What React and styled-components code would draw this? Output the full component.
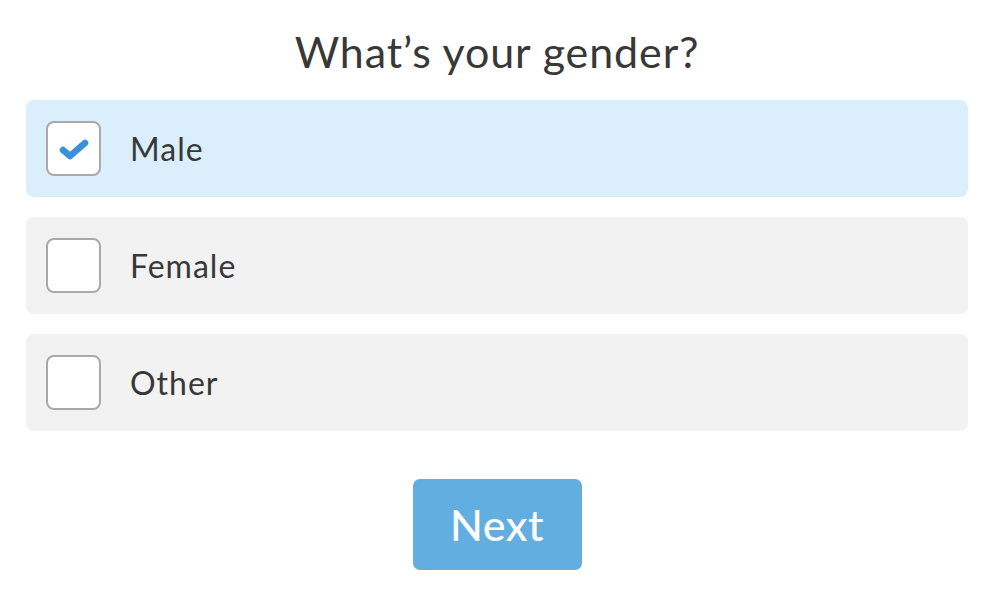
import styled, { createGlobalStyle } from "styled-components";
import { useState } from "react";

const GlobalStyle = createGlobalStyle`
  html, body {
    margin: 0;
    padding: 0;
    background: #ffffff;
  }
  body {
    font-family: "Lato", "Open Sans", sans-serif;
    color: #333333;
  }
`;

const options = ["Male", "Female", "Other"];

function App() {
  const [selected, setSelected] = useState("Male");

  return (
    <Page>
      <GlobalStyle />
      <Title>What’s your gender?</Title>
      <OptionList>
        {options.map((opt) => (
          <Option
            key={opt}
            $active={selected === opt}
            onClick={() => setSelected(opt)}
          >
            <Box>
              {selected === opt && (
                <svg width="34" height="26" viewBox="0 0 34 26">
                  <path
                    d="M6 14 L13 20 L28 7"
                    fill="none"
                    stroke="#3a90da"
                    strokeWidth="6.5"
                    strokeLinecap="round"
                    strokeLinejoin="round"
                  />
                </svg>
              )}
            </Box>
            <Label>{opt}</Label>
          </Option>
        ))}
      </OptionList>
      <Footer>
        <NextButton>Next</NextButton>
      </Footer>
    </Page>
  );
}

export default App;

const Page = styled.div`
  width: 942px;
  margin-left: 26px;
  padding-top: 24px;
  display: flex;
  flex-direction: column;
`;

const Title = styled.h1`
  margin: 0 0 20px;
  height: 56px;
  line-height: 56px;
  text-align: center;
  font-size: 43px;
  font-weight: 400;
  color: #383838;
  letter-spacing: 0.9px;
`;

const OptionList = styled.div`
  display: flex;
  flex-direction: column;
  gap: 20px;
`;

const Option = styled.div`
  height: 97px;
  box-sizing: border-box;
  padding-left: 20px;
  display: flex;
  align-items: center;
  gap: 29px;
  border-radius: 8px;
  background: ${(p) => (p.$active ? "#dbeefc" : "#f2f2f2")};
  cursor: pointer;
`;

const Box = styled.div`
  width: 55px;
  height: 55px;
  box-sizing: border-box;
  border: 2px solid #a9a9a9;
  border-radius: 8px;
  background: #ffffff;
  display: flex;
  align-items: center;
  justify-content: center;
`;

const Label = styled.span`
  font-size: 32px;
  color: #383838;
  letter-spacing: 1px;
`;

const Footer = styled.div`
  display: flex;
  justify-content: center;
  padding-top: 48px;
`;

const NextButton = styled.button`
  width: 169px;
  height: 91px;
  border: none;
  border-radius: 7px;
  background: #62aee1;
  color: #ffffff;
  font-family: "Lato", "Open Sans", sans-serif;
  font-size: 43px;
  font-weight: 500;
  letter-spacing: 0.5px;
  cursor: pointer;
`;
